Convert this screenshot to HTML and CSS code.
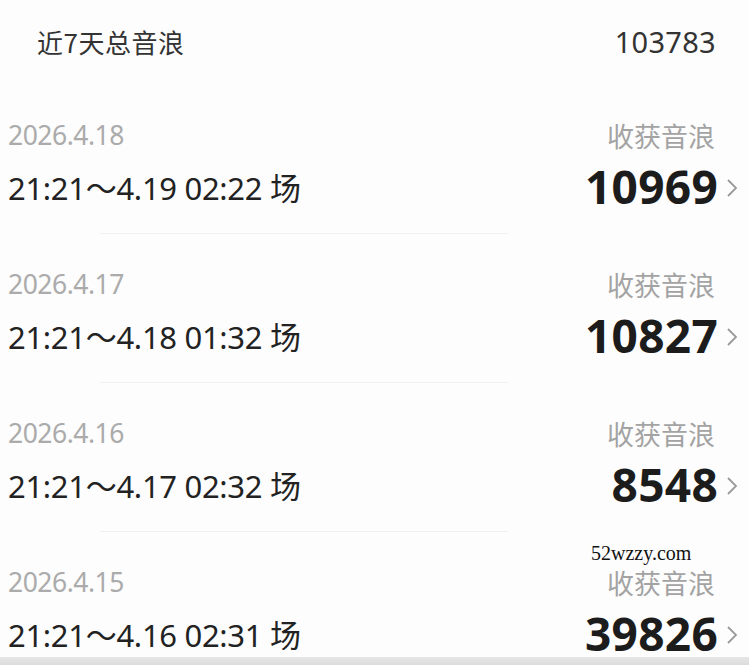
FILE: index.html
```html
<!DOCTYPE html>
<html lang="zh-CN">
<head>
<meta charset="utf-8">
<link rel="stylesheet" href="styles.css">
</head>
<body>
<div class="page">
  <div class="summary">
    <span class="summary-label">近7天总音浪</span>
    <span class="summary-value">103783</span>
  </div>
  <div class="list">
    <div class="row">
      <div class="line top">
        <span class="date">2026.4.18</span>
        <span class="caption">收获音浪</span>
      </div>
      <div class="line main">
        <span class="session">21:21～4.19 02:22 场</span>
        <span class="amount">10969<svg class="chev" viewBox="0 0 12 22" width="12" height="22"><path d="M2 3 L10 11 L2 19" fill="none" stroke="#9a9a9a" stroke-width="1.8"/></svg></span>
      </div>
      <div class="divider"></div>
    </div>
    <div class="row">
      <div class="line top">
        <span class="date">2026.4.17</span>
        <span class="caption">收获音浪</span>
      </div>
      <div class="line main">
        <span class="session">21:21～4.18 01:32 场</span>
        <span class="amount">10827<svg class="chev" viewBox="0 0 12 22" width="12" height="22"><path d="M2 3 L10 11 L2 19" fill="none" stroke="#9a9a9a" stroke-width="1.8"/></svg></span>
      </div>
      <div class="divider"></div>
    </div>
    <div class="row">
      <div class="line top">
        <span class="date">2026.4.16</span>
        <span class="caption">收获音浪</span>
      </div>
      <div class="line main">
        <span class="session">21:21～4.17 02:32 场</span>
        <span class="amount">8548<svg class="chev" viewBox="0 0 12 22" width="12" height="22"><path d="M2 3 L10 11 L2 19" fill="none" stroke="#9a9a9a" stroke-width="1.8"/></svg></span>
      </div>
      <div class="divider"></div>
    </div>
    <div class="row">
      <div class="line top">
        <span class="date">2026.4.15</span>
        <span class="caption">收获音浪</span>
        <span class="watermark">52wzzy.com</span>
      </div>
      <div class="line main">
        <span class="session">21:21～4.16 02:31 场</span>
        <span class="amount">39826<svg class="chev" viewBox="0 0 12 22" width="12" height="22"><path d="M2 3 L10 11 L2 19" fill="none" stroke="#9a9a9a" stroke-width="1.8"/></svg></span>
      </div>
    </div>
  </div>
  <div class="bottom-bar"></div>
</div>
</body>
</html>
```
FILE: styles.css
```css
* { box-sizing: border-box; }
html, body { margin: 0; padding: 0; }
body {
  background: #fdfdfd;
  font-family: "Noto Sans", "Noto Sans CJK SC", sans-serif;
  width: 749px;
  height: 665px;
  overflow: hidden;
}
.page {
  position: relative;
  height: 665px;
  overflow: hidden;
}
.summary {
  display: flex;
  justify-content: space-between;
  align-items: center;
  height: 110px;
  padding: 22px 33px 48px 37px;
}
.summary-label {
  font-family: "Noto Sans CJK SC", sans-serif;
  font-size: 26px;
  color: #333;
  line-height: 40px;
  letter-spacing: 0.5px;
}
.summary-value {
  font-size: 29px;
  color: #333;
  line-height: 40px;
  letter-spacing: 0.3px;
}
.row {
  height: 149px;
  padding: 0 11px 0 8px;
  display: flex;
  flex-direction: column;
}
.line {
  display: flex;
  justify-content: space-between;
  align-items: center;
  position: relative;
}
.line.top { height: 50px; }
.line.main { height: 54px; margin-top: -1px; }
.date {
  font-size: 26.5px;
  color: #ababab;
  letter-spacing: -0.5px;
}
.caption {
  font-family: "Noto Sans CJK SC", sans-serif;
  font-size: 27px;
  color: #a3a3a3;
  margin-right: 23px;
}
.session {
  font-size: 31px;
  color: #222;
  letter-spacing: -0.3px;
}
.amount {
  display: flex;
  align-items: center;
  font-size: 46px;
  font-weight: 700;
  color: #1c1c1c;
  letter-spacing: 0.3px;
}
.chev {
  margin-left: 8px;
  margin-top: 4px;
}
.divider {
  height: 1px;
  background: #f0f0f0;
  margin: 20px 230px 0 92px;
}
.watermark {
  position: absolute;
  left: 583px;
  top: -15px;
  font-family: "Liberation Serif", serif;
  font-size: 20px;
  color: #111;
}
.bottom-bar {
  position: absolute;
  left: 0;
  right: 0;
  bottom: 0;
  height: 8px;
  background: linear-gradient(#e6e6e6, #dcdcdc);
}
```
